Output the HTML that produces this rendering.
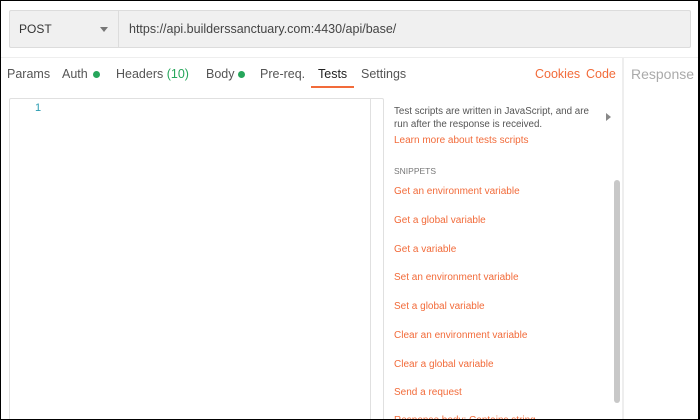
<!DOCTYPE html>
<html><head><style>
*{margin:0;padding:0;box-sizing:border-box}
html,body{width:700px;height:420px;overflow:hidden;background:#fff}
#w{position:absolute;left:0;top:0;width:700px;height:420px;overflow:hidden;font-family:"Liberation Sans",sans-serif}
.a{position:absolute;white-space:nowrap}
.t{font-size:12.5px;color:#555;top:67px}
.s{font-size:10px;left:394px;color:#f26b3a}
</style></head><body><div id="w">
<div class="a" style="left:9px;top:10px;width:682px;height:38px;background:#f0f0f0;border:1px solid #dcdcdc;border-radius:2px"></div>
<div class="a" style="left:118px;top:11px;width:1px;height:36px;background:#dcdcdc"></div>
<div class="a" style="left:19px;top:22px;font-size:12px;color:#333">POST</div>
<div class="a" style="left:100px;top:27px;width:0;height:0;border-left:4px solid transparent;border-right:4px solid transparent;border-top:5px solid #777"></div>
<div class="a" style="left:129px;top:22px;font-size:12.5px;color:#444">https://api.builderssanctuary.com:4430/api/base/</div>
<div class="a" style="left:0;top:57px;width:700px;height:1px;background:#eee"></div>
<div class="a t" style="left:7px">Params</div>
<div class="a t" style="left:62px">Auth</div>
<div class="a" style="left:93px;top:71px;width:7px;height:7px;border-radius:50%;background:#26a65b"></div>
<div class="a t" style="left:116px">Headers <span style="color:#26a65b">(10)</span></div>
<div class="a t" style="left:206px">Body</div>
<div class="a" style="left:238px;top:71px;width:7px;height:7px;border-radius:50%;background:#26a65b"></div>
<div class="a t" style="left:260px">Pre-req.</div>
<div class="a t" style="left:318px;color:#222">Tests</div>
<div class="a" style="left:311px;top:86px;width:43px;height:2px;background:#f26b3a"></div>
<div class="a t" style="left:361px">Settings</div>
<div class="a t" style="left:535px;color:#f26b3a">Cookies</div>
<div class="a t" style="left:586px;color:#f26b3a">Code</div>
<div class="a" style="left:622px;top:57px;width:2px;height:363px;background:#eee"></div>
<div class="a" style="left:631px;top:66px;font-size:14px;color:#aaa">Response</div>
<div class="a" style="left:9px;top:98px;width:375px;height:330px;border:1px solid #e0e0e0;border-radius:2px"></div>
<div class="a" style="left:370px;top:99px;width:1px;height:321px;background:#e0e0e0"></div>
<div class="a" style="left:35px;top:102px;font-size:11px;color:#2a9bb0">1</div>
<div class="a" style="left:394px;top:105px;font-size:9.8px;color:#555;line-height:13px">Test scripts are written in JavaScript, and are<br>run after the response is received.</div>
<div class="a" style="left:606px;top:113px;width:0;height:0;border-top:4px solid transparent;border-bottom:4px solid transparent;border-left:5px solid #888"></div>
<div class="a s" style="top:135px">Learn more about tests scripts</div>
<div class="a" style="left:394px;top:166px;font-size:8.5px;color:#777">SNIPPETS</div>
<div class="a s" style="top:186px">Get an environment variable</div>
<div class="a s" style="top:215px">Get a global variable</div>
<div class="a s" style="top:244px">Get a variable</div>
<div class="a s" style="top:272px">Set an environment variable</div>
<div class="a s" style="top:301px">Set a global variable</div>
<div class="a s" style="top:330px">Clear an environment variable</div>
<div class="a s" style="top:359px">Clear a global variable</div>
<div class="a s" style="top:387px">Send a request</div>
<div class="a s" style="top:415px">Response body: Contains string</div>
<div class="a" style="left:614px;top:180px;width:6px;height:223px;border-radius:3px;background:#c8c8c8"></div>
<div class="a" style="left:0;top:0;width:700px;height:420px;border:1px solid #000;border-right-width:2px"></div>
</div></body></html>
